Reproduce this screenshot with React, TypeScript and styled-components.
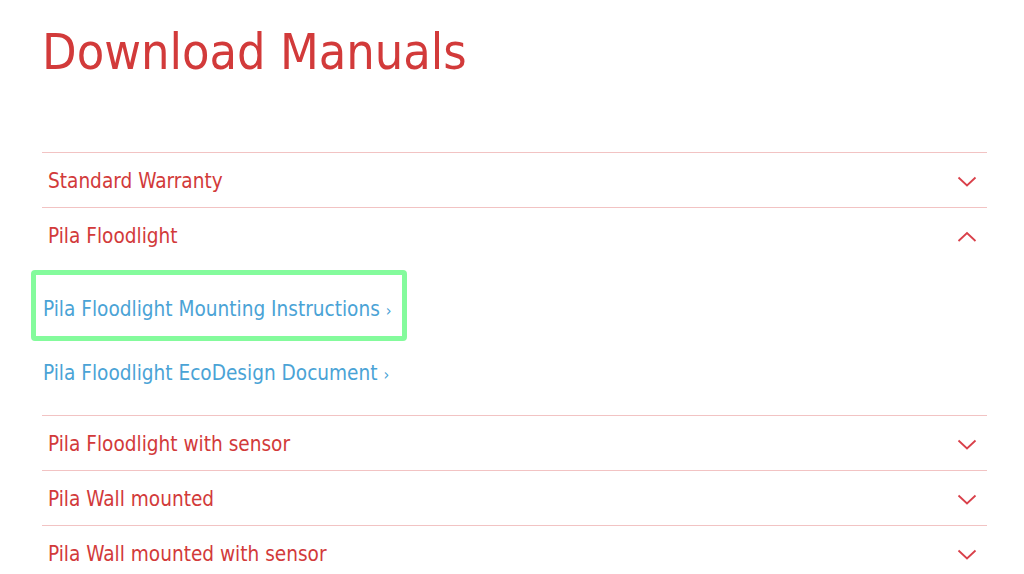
import * as React from 'react';
import styled, { createGlobalStyle } from 'styled-components';

interface Section {
    title: string;
    open?: boolean;
    links?: { label: string; highlight?: boolean }[];
}

const sections: Section[] = [
    { title: 'Standard Warranty' },
    {
        title: 'Pila Floodlight',
        open: true,
        links: [
            { label: 'Pila Floodlight Mounting Instructions', highlight: true },
            { label: 'Pila Floodlight EcoDesign Document' },
        ],
    },
    { title: 'Pila Floodlight with sensor' },
    { title: 'Pila Wall mounted' },
    { title: 'Pila Wall mounted with sensor' },
];

const Chevron = ({ up }: { up?: boolean }) => (
    <svg width="20" height="11" viewBox="0 0 20 11">
        <path
            d={up ? 'M1.5 10 L10 2 L18.5 10' : 'M1.5 1.5 L10 9.5 L18.5 1.5'}
            fill="none"
            stroke="#d9404a"
            strokeWidth="1.8"
        />
    </svg>
);

export default function App() {
    return (
        <>
            <GlobalStyle />
            <Page>
                <Title>Download Manuals</Title>
                <Accordion>
                    {sections.map(s => (
                        <Item key={s.title}>
                            <Header>
                                <HeaderText>{s.title}</HeaderText>
                                <Chevron up={s.open} />
                            </Header>
                            {s.open && s.links && (
                                <Panel>
                                    {s.links.map(l => (
                                        <LinkRow key={l.label} $highlight={l.highlight}>
                                            <ManualLink href="#">
                                                {l.label} <Arrow>›</Arrow>
                                            </ManualLink>
                                        </LinkRow>
                                    ))}
                                </Panel>
                            )}
                        </Item>
                    ))}
                </Accordion>
            </Page>
        </>
    );
}

const GlobalStyle = createGlobalStyle`
    html, body {
        margin: 0;
        padding: 0;
        background: #ffffff;
    }
    body {
        font-family: "DejaVu Sans Condensed", "DejaVu Sans", sans-serif;
    }
`;

const Page = styled('div')`
    width: 945px;
    padding: 0 0 0 42px;
    overflow: hidden;
    height: 574px;
`;

const Title = styled('h1')`
    margin: 22px 0 0 0;
    font-size: 50px;
    font-weight: normal;
    line-height: 60px;
    color: #d23a3a;
    height: 130px;
`;

const Accordion = styled('div')`
    display: flex;
    flex-direction: column;
`;

const Item = styled('div')`
    border-top: 1px solid #f2c3c3;
`;

const Header = styled('div')`
    height: 54px;
    display: flex;
    align-items: center;
    justify-content: space-between;
    padding: 2px 10px 0 6px;
    box-sizing: border-box;
`;

const HeaderText = styled('span')`
    font-size: 20.6px;
    color: #d23a3a;
`;

const Panel = styled('div')`
    padding: 15px 0 10px 0;
    display: flex;
    flex-direction: column;
`;

const LinkRow = styled('div')<{ $highlight?: boolean }>`
    position: relative;
    height: 64px;
    display: flex;
    align-items: center;
    padding-left: 1px;

    &::after {
        content: '';
        display: ${p => (p.$highlight ? 'block' : 'none')};
        position: absolute;
        left: -11px;
        top: -7px;
        width: 366px;
        height: 61px;
        border: 5px solid #84fb9c;
        border-radius: 4px;
        pointer-events: none;
    }
`;

const ManualLink = styled('a')`
    font-size: 20.6px;
    color: #4aa3d6;
    text-decoration: none;
`;

const Arrow = styled('span')`
    font-size: 16px;
`;
